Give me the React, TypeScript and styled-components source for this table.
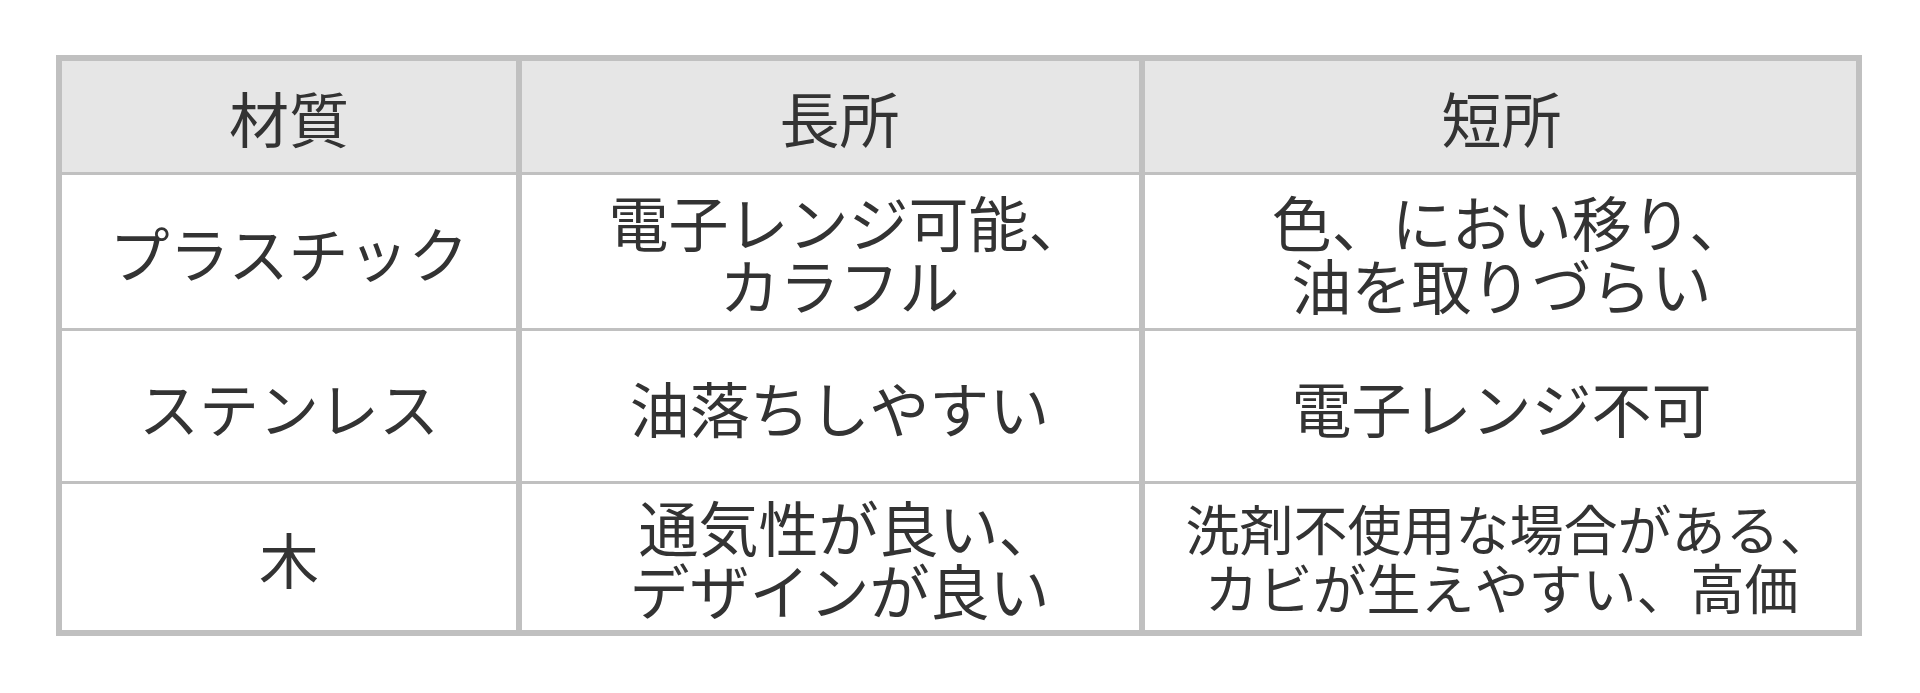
import React from "react";
import styled, { createGlobalStyle } from "styled-components";

const GlobalStyle = createGlobalStyle`
  html, body {
    margin: 0;
    padding: 0;
    background: #ffffff;
  }
  body {
    font-family: "Noto Sans CJK JP", "Noto Sans", sans-serif;
    color: #333333;
  }
`;

const Page = styled.div`
  width: 1920px;
  height: 693px;
  box-sizing: border-box;
  padding: 55px 0 0 56px;
  background: #ffffff;
`;

const Table = styled.div`
  display: grid;
  grid-template-columns: 454px 617px 711px;
  grid-template-rows: 111px 153px 150px 146px;
  column-gap: 6px;
  row-gap: 3px;
  padding: 6px;
  width: max-content;
  background: #c0c0c0;
`;

const Cell = styled.div<{ $head?: boolean; $small?: boolean; $indent: number }>`
  display: flex;
  align-items: center;
  justify-content: center;
  box-sizing: border-box;
  padding-left: ${(p) => p.$indent}px;
  text-align: center;
  background: ${(p) => (p.$head ? "#e6e6e6" : "#ffffff")};
  font-family: "Noto Sans CJK JP", "Noto Sans", sans-serif;
  font-weight: 400;
  font-size: ${(p) => (p.$small ? "54px" : "60px")};
  line-height: ${(p) => (p.$small ? "59px" : "63px")};
  color: #333333;
  white-space: nowrap;
`;

const Line = styled.span`
  display: block;
`;

const Hang = styled.span`
  margin-right: -0.3em;
`;

type Row = { cells: { lines: string[]; small?: boolean }[] };

const header = ["材質", "長所", "短所"];
const indents = [0, 18, 2];

const rows: Row[] = [
  {
    cells: [
      { lines: ["プラスチック"] },
      { lines: ["電子レンジ可能、", "カラフル"] },
      { lines: ["色、におい移り、", "油を取りづらい"] },
    ],
  },
  {
    cells: [
      { lines: ["ステンレス"] },
      { lines: ["油落ちしやすい"] },
      { lines: ["電子レンジ不可"] },
    ],
  },
  {
    cells: [
      { lines: ["木"] },
      { lines: ["通気性が良い、", "デザインが良い"] },
      {
        lines: ["洗剤不使用な場合がある、", "カビが生えやすい、高価"],
        small: true,
      },
    ],
  },
];

function renderLine(l: string) {
  if (l.endsWith("、")) {
    return (
      <>
        {l.slice(0, -1)}
        <Hang>、</Hang>
      </>
    );
  }
  return l;
}

export default function App() {
  return (
    <>
      <GlobalStyle />
      <Page>
        <Table>
          {header.map((h, hi) => (
            <Cell key={h} $head $indent={indents[hi]}>
              {h}
            </Cell>
          ))}
          {rows.map((r, ri) =>
            r.cells.map((c, ci) => (
              <Cell key={`${ri}-${ci}`} $small={c.small} $indent={indents[ci]}>
                <div>
                  {c.lines.map((l, li) => (
                    <Line key={li}>{renderLine(l)}</Line>
                  ))}
                </div>
              </Cell>
            ))
          )}
        </Table>
      </Page>
    </>
  );
}
